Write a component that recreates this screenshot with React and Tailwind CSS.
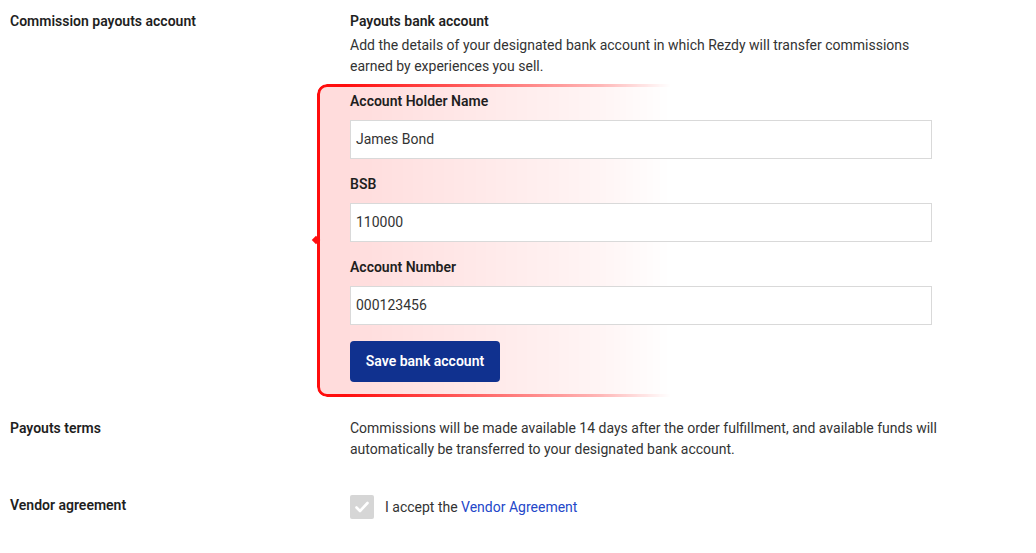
import { useState } from "react";

const FIELDS = [
  { label: "Account Holder Name", value: "James Bond" },
  { label: "BSB", value: "110000" },
  { label: "Account Number", value: "000123456" },
];

export default function App() {
  const [values, setValues] = useState(FIELDS.map((f) => f.value));

  return (
    <div
      className="min-h-[553px] bg-white pl-[10px] pt-[11px] text-[14px] leading-[21px] text-[#222]"
      style={{ fontFamily: "Roboto, 'Liberation Sans', sans-serif" }}
    >
      {/* Commission payouts account */}
      <div className="grid grid-cols-[340px_600px]">
        <div className="font-semibold text-[#1f1f1f]">Commission payouts account</div>
        <div>
          <div className="font-semibold text-[#1f1f1f]">Payouts bank account</div>
          <p className="mt-[3px] text-[#333]">
            Add the details of your designated bank account in which Rezdy will transfer commissions
            earned by experiences you sell.
          </p>

          <div className="relative mt-[14px] w-[582px]">
            {/* highlight bracket */}
            <div className="pointer-events-none absolute -left-[33px] -top-[7px] h-[313px] w-[353px]">
              <div className="h-full w-full rounded-l-[10px] border-[3px] border-r-0 border-[#ff0d0d] bg-[#ffdcdc] [mask-image:linear-gradient(to_right,black_8%,rgba(0,0,0,0.3)_80%,transparent_100%)]" />
              <div className="absolute -left-[4px] top-[153px] h-[6px] w-[6px] rotate-45 bg-[#ff0d0d]" />
            </div>

            <div className="relative">
              {FIELDS.map((f, i) => (
                <div key={f.label} className={i > 0 ? "mt-[15px]" : ""}>
                  <label className="block font-semibold text-[#1f1f1f]">{f.label}</label>
                  <input
                    type="text"
                    value={values[i]}
                    onChange={(e) => {
                      const next = [...values];
                      next[i] = e.target.value;
                      setValues(next);
                    }}
                    className="mt-[8px] block h-[39px] w-full border border-[#d9d9d9] bg-white px-[5px] pb-[2px] text-[14px] text-[#333] outline-none"
                  />
                </div>
              ))}

              <button className="mt-[16px] h-[41px] w-[150px] rounded-[4px] bg-[#10318f] text-[14px] font-semibold text-white">
                Save bank account
              </button>
            </div>
          </div>
        </div>
      </div>

      {/* Payouts terms */}
      <div className="mt-[36px] grid grid-cols-[340px_600px]">
        <div className="font-semibold text-[#1f1f1f]">Payouts terms</div>
        <p className="text-[#333]">
          Commissions will be made available 14 days after the order fulfillment, and available funds will
          automatically be transferred to your designated bank account.
        </p>
      </div>

      {/* Vendor agreement */}
      <div className="mt-[35px] grid grid-cols-[340px_600px]">
        <div className="font-semibold text-[#1f1f1f]">Vendor agreement</div>
        <div className="flex h-[24px] items-center gap-[11px]">
          <span className="flex h-[24px] w-[24px] items-center justify-center rounded-[2px] bg-[#d6d6d6]">
            <svg width="16" height="16" viewBox="0 0 16 16" fill="none">
              <path d="M2.5 8.5l3.5 3.5 7.5-8" stroke="white" strokeWidth="2.6" strokeLinecap="round" strokeLinejoin="round" />
            </svg>
          </span>
          <span className="text-[#333]">
            I accept the <a href="#" className="text-[#2447c9]">Vendor Agreement</a>
          </span>
        </div>
      </div>
    </div>
  );
}
